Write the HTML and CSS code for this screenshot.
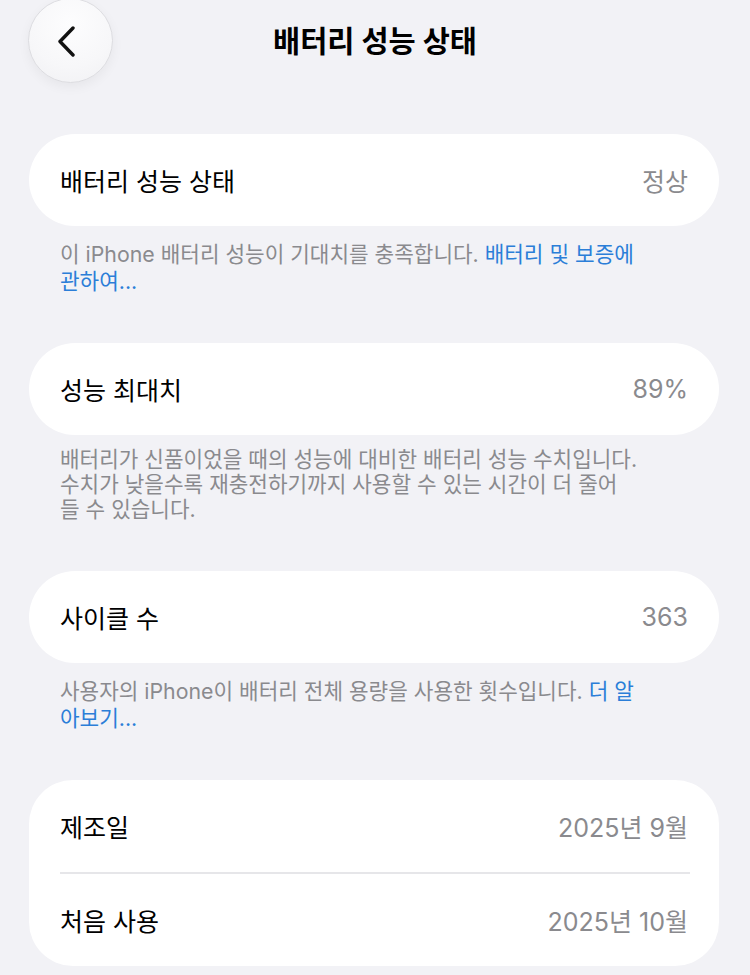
FILE: index.html
```html
<!DOCTYPE html>
<html lang="ko">
<head>
<meta charset="utf-8">
<title>배터리 성능 상태</title>
<link rel="stylesheet" href="styles.css">
</head>
<body>
<header class="nav">
  <button class="back" aria-label="뒤로">
    <svg class="chev" viewBox="0 0 20 32" width="20" height="32">
      <path d="M15 3 L2 16.5 L15 30" fill="none" stroke="#111" stroke-width="3.4" stroke-linecap="round" stroke-linejoin="round"/>
    </svg>
  </button>
  <h1 class="title">배터리 성능 상태</h1>
  <span class="spacer"></span>
</header>

<main class="content">
  <section class="card">
    <div class="row"><span class="label">배터리 성능 상태</span><span class="value">정상</span></div>
  </section>
  <p class="footer">이 iPhone 배터리 성능이 기대치를 충족합니다. <a class="link">배터리 및 보증에<br>관하여...</a></p>

  <section class="card">
    <div class="row"><span class="label">성능 최대치</span><span class="value">89%</span></div>
  </section>
  <p class="footer footer-compact">배터리가 신품이었을 때의 성능에 대비한 배터리 성능 수치입니다.<br>수치가 낮을수록 재충전하기까지 사용할 수 있는 시간이 더 줄어<br>들 수 있습니다.</p>

  <section class="card">
    <div class="row"><span class="label">사이클 수</span><span class="value">363</span></div>
  </section>
  <p class="footer">사용자의 iPhone이 배터리 전체 용량을 사용한 횟수입니다. <a class="link">더 알<br>아보기...</a></p>

  <section class="card card-group">
    <div class="row"><span class="label">제조일</span><span class="value">2025년 9월</span></div>
    <div class="divider"></div>
    <div class="row"><span class="label">처음 사용</span><span class="value">2025년 10월</span></div>
  </section>
</main>
</body>
</html>
```

FILE: styles.css
```css
html, body {
  margin: 0;
  padding: 0;
}
body {
  background: #f2f2f6;
  font-family: Inter, "Noto Sans CJK KR", sans-serif;
  color: #000;
  width: 750px;
  height: 975px;
  overflow: hidden;
}
.nav {
  display: grid;
  grid-template-columns: 1fr auto 1fr;
  align-items: center;
  padding: 0 28px;
  height: 82px;
  margin-top: -2px;
}
.back {
  width: 85px;
  height: 85px;
  border-radius: 50%;
  border: 1px solid #dcdce0;
  background: radial-gradient(circle at 50% 30%, #fdfdfe 0%, #f7f7f9 60%, #f0f0f3 100%);
  box-shadow: 0 4px 12px rgba(0, 0, 0, 0.05);
  display: flex;
  align-items: center;
  justify-content: center;
  padding: 0;
}
.chev {
  display: block;
  margin-left: -5px;
  margin-top: 1px;
}
.title {
  margin: 0;
  font-size: 29.5px;
  font-weight: 700;
  line-height: 36px;
  text-align: center;
}
.content {
  padding: 54px 31px 0 29px;
}
.card {
  background: #fff;
  border-radius: 46px;
}
.card-group {
  border-radius: 44px;
}
.row {
  height: 92px;
  display: flex;
  align-items: center;
  justify-content: space-between;
  padding: 0 31px;
  font-size: 25px;
}
.label {
  color: #000;
}
.value {
  color: #8a8a8e;
}
.divider {
  height: 2px;
  background: #e6e6e9;
  margin: 0 29px 0 31px;
}
.card-group .row:first-child {
  height: 92px;
}
.card-group .row:last-child {
  height: 92px;
}
.footer {
  margin: 15px 0 49px;
  padding: 0 31px;
  font-size: 21.3px;
  line-height: 26.5px;
  color: #8a8a8e;
}
.footer-compact {
  margin-top: 12px;
  line-height: 25px;
}
.link {
  color: #2b7ed8;
}
```
